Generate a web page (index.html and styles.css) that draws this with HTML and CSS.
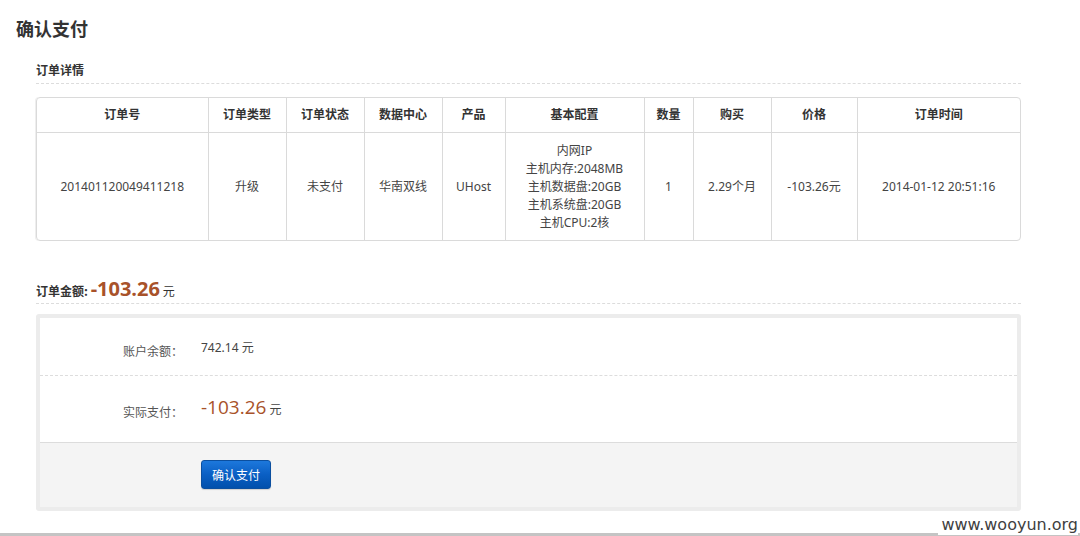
FILE: index.html
```html
<!DOCTYPE html>
<html lang="zh-CN">
<head>
<meta charset="utf-8">
<title>确认支付</title>
<link rel="stylesheet" href="styles.css">
</head>
<body>
<div class="page">
  <h1 class="page-title">确认支付</h1>
  <div class="content">
    <h2 class="sec-title">订单详情</h2>
    <div class="table-wrap">
      <table class="order-table">
        <colgroup>
          <col class="c1"><col class="c2"><col class="c3"><col class="c4"><col class="c5">
          <col class="c6"><col class="c7"><col class="c8"><col class="c9"><col class="c10">
        </colgroup>
        <thead>
          <tr>
            <th>订单号</th><th>订单类型</th><th>订单状态</th><th>数据中心</th><th>产品</th>
            <th>基本配置</th><th>数量</th><th>购买</th><th>价格</th><th>订单时间</th>
          </tr>
        </thead>
        <tbody>
          <tr>
            <td>201401120049411218</td>
            <td>升级</td>
            <td>未支付</td>
            <td>华南双线</td>
            <td>UHost</td>
            <td class="config">内网IP<br>主机内存:2048MB<br>主机数据盘:20GB<br>主机系统盘:20GB<br>主机CPU:2核</td>
            <td>1</td>
            <td>2.29个月</td>
            <td>-103.26元</td>
            <td>2014-01-12 20:51:16</td>
          </tr>
        </tbody>
      </table>
    </div>

    <h2 class="sec-title amount-title">订单金额: <span class="amount">-103.26</span> <span class="yuan">元</span></h2>

    <div class="pay-box">
      <div class="pay-row row-balance">
        <div class="pay-label">账户余额：</div>
        <div class="pay-value">742.14 元</div>
      </div>
      <div class="pay-row row-actual">
        <div class="pay-label">实际支付：</div>
        <div class="pay-value"><span class="actual">-103.26</span> 元</div>
      </div>
      <div class="pay-foot">
        <button class="btn-confirm" type="button">确认支付</button>
      </div>
    </div>
  </div>
</div>
<div class="bottom-bar"></div>
<div class="watermark">www.wooyun.org</div>
</body>
</html>
```

FILE: styles.css
```css
html, body {
  margin: 0;
  padding: 0;
  background: #fff;
}
body {
  width: 1080px;
  height: 536px;
  overflow: hidden;
  font-family: "Noto Sans", "Noto Sans CJK SC", sans-serif;
  font-size: 12px;
  color: #444;
  position: relative;
}
.page {
  padding: 14px 0 0 16px;
}
.page-title {
  margin: 0;
  font-size: 18px;
  line-height: 28px;
  font-weight: bold;
  color: #333;
  font-family: "Noto Sans CJK SC", sans-serif;
}
.content {
  width: 985px;
  margin: 0 0 0 20px;
}
.sec-title {
  margin: 18px 0 0 0;
  font-size: 12px;
  font-weight: bold;
  color: #333;
  line-height: 20px;
  padding-bottom: 3px;
  border-bottom: 1px dashed #dcdcdc;
  font-family: "Noto Sans CJK SC", sans-serif;
}
.table-wrap {
  margin-top: 13px;
  border: 1px solid #dadada;
  border-radius: 4px;
  overflow: hidden;
  box-shadow: -1px 0 0 #eee;
}
.order-table {
  width: 100%;
  border-collapse: collapse;
  table-layout: fixed;
}
.c1 { width: 171px; }
.c2 { width: 78px; }
.c3 { width: 78px; }
.c4 { width: 78px; }
.c5 { width: 63px; }
.c6 { width: 139px; }
.c7 { width: 49px; }
.c8 { width: 78px; }
.c9 { width: 86px; }
.c10 { width: auto; }
.order-table th,
.order-table td {
  border-left: 1px solid #dadada;
  text-align: center;
  padding: 0;
}
.order-table th:first-child,
.order-table td:first-child {
  border-left: 0;
}
.order-table th {
  height: 31px;
  padding-bottom: 3px;
  font-weight: bold;
  color: #333;
  border-bottom: 1px solid #dadada;
  font-family: "Noto Sans CJK SC", sans-serif;
}
.order-table td {
  color: #444;
  line-height: 18px;
  vertical-align: middle;
}
.order-table td.config {
  padding: 9px 0 8px;
}
.amount-title {
  margin-top: 36px;
  line-height: 24px;
  padding-bottom: 0;
}
.amount {
  font-family: "Open Sans", "Noto Sans", sans-serif;
  font-size: 20px;
  font-weight: bold;
  color: #a8522a;
}
.yuan {
  font-weight: normal;
  color: #333;
}
.pay-box {
  margin-top: 10px;
  border: 4px solid #ececec;
  border-radius: 3px;
  background: #fff;
}
.pay-row {
  display: flex;
  align-items: center;
}
.row-balance {
  height: 57px;
  border-bottom: 1px dashed #dddddd;
}
.row-actual {
  height: 66px;
  border-bottom: 1px solid #dcdcdc;
}
.pay-label {
  width: 143px;
  text-align: right;
  color: #555;
  margin-right: 18px;
}
.row-balance .pay-label { padding-top: 8px; }
.row-actual .pay-label { padding-top: 6px; }
.row-actual .pay-value { padding-bottom: 4px; }
.pay-value {
  color: #444;
}
.actual {
  font-family: "Open Sans", "Noto Sans", sans-serif;
  font-size: 19px;
  color: #a8522a;
}
.pay-foot {
  background: #f4f4f4;
  height: 64px;
  padding-left: 161px;
  padding-top: 17px;
  box-sizing: border-box;
}
.btn-confirm {
  width: 70px;
  height: 29px;
  border: 1px solid #0b4f9f;
  border-radius: 3px;
  background: linear-gradient(to bottom, #1d78dc 0%, #0a5fc4 50%, #0150ac 100%);
  color: #fff;
  font-family: "Noto Sans CJK SC", sans-serif;
  font-size: 12px;
  padding: 0;
  cursor: pointer;
  box-shadow: 0 1px 1px rgba(0,0,0,0.15);
}
.bottom-bar {
  position: absolute;
  left: 0;
  right: 0;
  bottom: 0;
  height: 3px;
  background: #c4c4c4;
}
.watermark {
  position: absolute;
  right: 2px;
  bottom: 1px;
  font-family: "DejaVu Sans", sans-serif;
  font-size: 16px;
  line-height: 20px;
  color: #3f3f3f;
  background: #fff;
  padding-left: 3px;
}
```
